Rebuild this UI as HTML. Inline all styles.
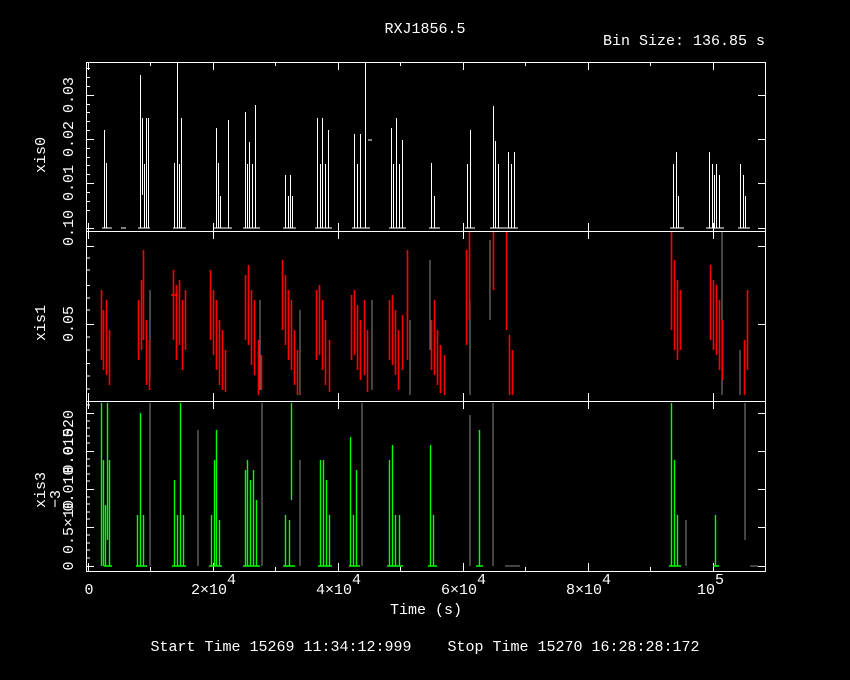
<!DOCTYPE html>
<html><head><style>
body{margin:0;background:#000;}
svg{display:block}
text{font-family:"Liberation Mono","DejaVu Sans Mono",monospace;fill:#fff;font-size:15px;white-space:pre}
</style></head><body>
<svg width="850" height="680" viewBox="0 0 850 680">
<rect width="850" height="680" fill="#000"/>
<text x="425" y="33" text-anchor="middle" font-size="16">RXJ1856.5</text>
<text x="765" y="45" text-anchor="end">Bin Size: 136.85 s</text>
<text x="426" y="614" text-anchor="middle">Time (s)</text>
<text x="425" y="651" text-anchor="middle" xml:space="preserve">Start Time 15269 11:34:12:999    Stop Time 15270 16:28:28:172</text>
<!-- x tick labels -->
<text x="89" y="594" text-anchor="middle">0</text>
<text x="191" y="594">2×10</text><text x="227" y="584" font-size="12">4</text>
<text x="316" y="594">4×10</text><text x="352" y="584" font-size="12">4</text>
<text x="441" y="594">6×10</text><text x="477" y="584" font-size="12">4</text>
<text x="566" y="594">8×10</text><text x="602" y="584" font-size="12">4</text>
<text x="697" y="594">10</text><text x="715" y="584" font-size="12">5</text>
<!-- y labels -->
<g font-size="15">
<text transform="translate(45,155) rotate(-90)" text-anchor="middle">xis0</text>
<text transform="translate(45,323) rotate(-90)" text-anchor="middle">xis1</text>
<text transform="translate(45,490) rotate(-90)" text-anchor="middle">xis3</text>
<text transform="translate(73,183) rotate(-90)" text-anchor="middle">0.01</text>
<text transform="translate(73,139) rotate(-90)" text-anchor="middle">0.02</text>
<text transform="translate(73,95) rotate(-90)" text-anchor="middle">0.03</text>
<text transform="translate(73,228) rotate(-90)" text-anchor="middle">0.10</text>
<text transform="translate(73,324) rotate(-90)" text-anchor="middle">0.05</text>
<text transform="translate(73,410) rotate(-90)" text-anchor="end">0.020</text>
<text transform="translate(73,451) rotate(-90)" text-anchor="middle">0.015</text>
<text transform="translate(73,489) rotate(-90)" text-anchor="middle">0.010</text>
<text transform="translate(73,527) rotate(-90)" text-anchor="middle">0.5×10</text>
<text transform="translate(73,566) rotate(-90)" text-anchor="middle">0</text>
<text transform="translate(60,508) rotate(-90)" font-size="12">−3</text>
</g>
<!-- frames -->
<g stroke="#fff" stroke-width="1" fill="none">
<rect x="86.5" y="62.5" width="679" height="509"/>
<path d="M86 231.5H766M86 401.5H766"/>
<path d="M88.5 62V70M213.5 62V70M338.5 62V70M463.5 62V70M588.5 62V70M713.5 62V70
M150.5 62V66M275.5 62V66M400.5 62V66M525.5 62V66M650.5 62V66
M88.5 231V223M213.5 231V223M338.5 231V223M463.5 231V223M588.5 231V223M713.5 231V223
M88.5 231V239M213.5 231V239M338.5 231V239M463.5 231V239M588.5 231V239M713.5 231V239
M88.5 401V393M213.5 401V393M338.5 401V393M463.5 401V393M588.5 401V393M713.5 401V393
M88.5 401V409M213.5 401V409M338.5 401V409M463.5 401V409M588.5 401V409M713.5 401V409
M88.5 571V563M213.5 571V563M338.5 571V563M463.5 571V563M588.5 571V563M713.5 571V563
M150.5 571V567M275.5 571V567M400.5 571V567M525.5 571V567M650.5 571V567"/>
<path d="M86 228.5H94M86 183.5H94M86 139.5H94M86 95.5H94M86 210.5H90M86 201.5H90M86 192.5H90M86 174.5H90M86 165.5H90M86 157.5H90M86 148.5H90M86 130.5H90M86 121.5H90M86 112.5H90M86 104.5H90M86 86.5H90M86 77.5H90M86 68.5H90
M766 228.5H758M766 183.5H758M766 139.5H758M766 95.5H758
M86 246.5H94M86 324.5H94M86 285.5H90M86 363.5H90M86 258H90M86 270H90M86 298H90M86 310H90M86 337H90M86 350H90M86 376H90M86 389H90
M766 246.5H758M766 324.5H758
M86 566.5H94M86 527.5H94M86 489.5H94M86 451.5H94M86 413.5H94M86 558H90M86 550H90M86 543H90M86 535H90M86 519H90M86 512H90M86 504H90M86 497H90M86 481H90M86 474H90M86 466H90M86 459H90M86 443H90M86 436H90M86 428H90M86 421H90M86 405H90
M766 566.5H758M766 527.5H758M766 489.5H758M766 451.5H758M766 413.5H758"/>
</g>
<!-- xis0 data -->
<g stroke="#fff" fill="none">
<path d="M104.5 130V228M106.5 163V228M102 228H112M121 228H126
M140.5 75V228M142.5 118V195M144.5 164V228M146.5 118V228M148.5 118V228M138 228H150
M177.5 63V228M179.5 164V228M181.5 118V228M174.5 163V228M173 228H186
M216.5 128V228M218.5 163V228M220.5 196V228M228.5 120V228M214 228H232
M245.5 112V228M247.5 164V228M249.5 142V228M252.5 164V228M255.5 105V228M243 228H260
M285.5 175V228M288.5 196V228M290.5 175V228M292.5 196V228M283 228H296
M317.5 118V228M320.5 164V228M322.5 118V228M325.5 164V228M328.5 130V228M315 228H332
M354.5 134V228M357.5 164V228M360.5 134V228M365.5 63V228M352 228H370M368 140H372
M391.5 128V228M393.5 164V228M396.5 118V228M399.5 164V228M402.5 140V228M389 228H406
M431.5 163V228M434.5 196V228M429 228H440
M467.5 164V228M470.5 130V228M465 228H475
M493.5 106V228M495.5 141V228M498.5 164V228M508.5 152V228M511.5 164V228M514.5 152V228M490 228H518
M673.5 164V228M676.5 152V228M678.5 196V228M670 228H684
M709.5 152V228M712.5 164V228M714.5 175V228M716.5 164V228M719.5 175V228M706 228H724
M740.5 164V228M743.5 175V228M745.5 196V228M738 228H750"/>
</g>
<!-- xis1 data -->
<g stroke="#888" fill="none">
<path d="M150 290V380M260 300V390M300 310V395M372 300V390M410 320V395M430 260V350M470 300V395M490 240V320M722 232V395M740 350V395"/>
</g>
<g stroke="#f00" fill="none" stroke-width="1.6">
<path d="M101.5 290V360M103.5 310V370M106.5 300V375M109.5 330V385
M138.5 300V360M141.5 280V350M143.5 250V340M146.5 320V385M149.5 340V390
M173.5 270V340M176.5 285V360M179.5 280V345M182.5 300V370M185.5 290V350M171 295H178
M210.5 270V340M213.5 290V355M216.5 300V370M219.5 320V385M222.5 330V390M225.5 350V392
M245.5 275V340M248.5 265V345M251.5 290V365M254.5 300V375M258.5 340V395M261.5 355V390
M282.5 260V330M285.5 275V345M288.5 290V360M291.5 300V370M294.5 330V385M297.5 350V395
M316.5 290V360M319.5 285V355M322.5 300V370M325.5 320V385M329.5 340V392
M351.5 295V360M354.5 290V355M357.5 305V370M360.5 320V380M364.5 300V375M367.5 330V392
M389.5 300V360M392.5 295V365M395.5 310V375M398.5 330V390M402.5 315V370M407.5 250V360
M431.5 320V370M434.5 300V375M437.5 330V385M440.5 345V393M444.5 355V395
M466.5 250V345M469.5 232V320M493.5 232V290M506.5 232V330M509.5 335V395M512.5 350V395
M671.5 232V330M674.5 260V350M677.5 280V360M680.5 290V350
M710.5 265V340M713.5 280V350M716.5 285V355M719.5 300V370M722.5 320V380
M744.5 340V395M747.5 290V370"/>
</g>
<!-- xis3 data -->
<g stroke="#888" fill="none">
<path d="M150 403V566M198 430V566M262 403V566M300 460V566M362 403V566M470 415V566M493 403V566M505 566H520M686 520V566M745 403V540M750 566H758"/>
</g>
<g stroke="#0f0" fill="none" stroke-width="1.4">
<path d="M101.5 403V566M103.5 460V566M105.5 505V566M107.5 403V540M109.5 460V566M104 566H112
M137.5 515V566M140.5 413V566M143.5 515V566M136 566H147
M174.5 480V566M177.5 515V566M180.5 403V566M183.5 515V566M172 566H186
M211.5 515V566M214.5 460V566M216.5 430V566M219.5 520V566M209 566H222
M245.5 470V566M247.5 460V566M250.5 480V566M253.5 470V566M256.5 500V566M243 566H260
M285.5 515V566M291.5 403V500M289.5 520V566M283 566H295
M320.5 460V566M323.5 460V566M326.5 480V566M329.5 515V566M318 566H332
M350.5 437V566M353.5 515V566M356.5 470V566M349 566H360
M389.5 460V566M392.5 445V566M395.5 515V566M399.5 515V566M387 566H403
M430.5 445V566M433.5 515V566M428 566H437
M479.5 430V566M476 566H483
M671.5 403V566M674.5 460V566M677.5 515V566M669 566H681
M715.5 515V566M713 566H719"/>
</g>
</svg>
</body></html>
